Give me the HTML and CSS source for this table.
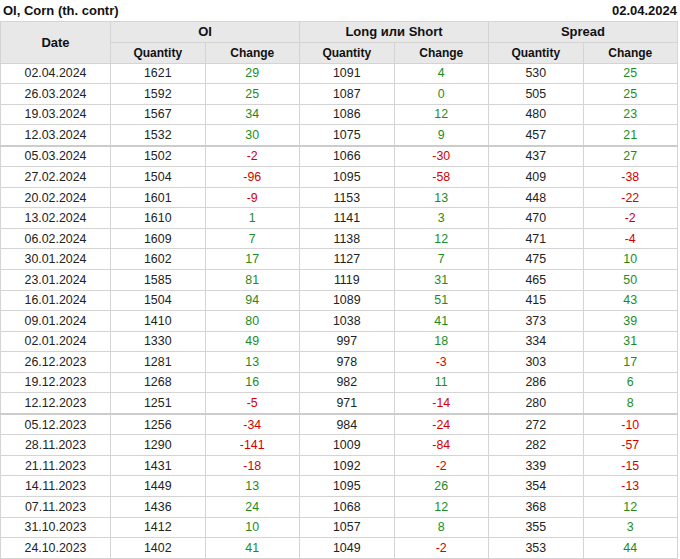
FILE: index.html
```html
<!DOCTYPE html>
<html>
<head>
<meta charset="utf-8">
<link rel="stylesheet" href="styles.css">
</head>
<body>
<div class="titlebar">
  <span class="title">OI, Corn (th. contr)</span>
  <span class="date">02.04.2024</span>
</div>
<table class="grid">
  <colgroup>
    <col class="c-date"><col><col><col><col><col><col>
  </colgroup>
  <thead>
    <tr class="h1">
      <th rowspan="2" class="big">Date</th>
      <th colspan="2" class="big">OI</th>
      <th colspan="2" class="big">Long или Short</th>
      <th colspan="2" class="big">Spread</th>
    </tr>
    <tr class="h2">
      <th>Quantity</th><th>Change</th>
      <th>Quantity</th><th>Change</th>
      <th>Quantity</th><th>Change</th>
    </tr>
  </thead>
  <tbody>
    <tr><td>02.04.2024</td><td>1621</td><td class="up">29</td><td>1091</td><td class="up">4</td><td>530</td><td class="up">25</td></tr>
    <tr><td>26.03.2024</td><td>1592</td><td class="up">25</td><td>1087</td><td class="up">0</td><td>505</td><td class="up">25</td></tr>
    <tr><td>19.03.2024</td><td>1567</td><td class="up">34</td><td>1086</td><td class="up">12</td><td>480</td><td class="up">23</td></tr>
    <tr><td>12.03.2024</td><td>1532</td><td class="up">30</td><td>1075</td><td class="up">9</td><td>457</td><td class="up">21</td></tr>
    <tr class="sep"><td>05.03.2024</td><td>1502</td><td class="dn">-2</td><td>1066</td><td class="dn">-30</td><td>437</td><td class="up">27</td></tr>
    <tr><td>27.02.2024</td><td>1504</td><td class="dn">-96</td><td>1095</td><td class="dn">-58</td><td>409</td><td class="dn">-38</td></tr>
    <tr><td>20.02.2024</td><td>1601</td><td class="dn">-9</td><td>1153</td><td class="up">13</td><td>448</td><td class="dn">-22</td></tr>
    <tr><td>13.02.2024</td><td>1610</td><td class="up">1</td><td>1141</td><td class="up">3</td><td>470</td><td class="dn">-2</td></tr>
    <tr><td>06.02.2024</td><td>1609</td><td class="up">7</td><td>1138</td><td class="up">12</td><td>471</td><td class="dn">-4</td></tr>
    <tr><td>30.01.2024</td><td>1602</td><td class="up">17</td><td>1127</td><td class="up">7</td><td>475</td><td class="up">10</td></tr>
    <tr><td>23.01.2024</td><td>1585</td><td class="up">81</td><td>1119</td><td class="up">31</td><td>465</td><td class="up">50</td></tr>
    <tr><td>16.01.2024</td><td>1504</td><td class="up">94</td><td>1089</td><td class="up">51</td><td>415</td><td class="up">43</td></tr>
    <tr><td>09.01.2024</td><td>1410</td><td class="up">80</td><td>1038</td><td class="up">41</td><td>373</td><td class="up">39</td></tr>
    <tr><td>02.01.2024</td><td>1330</td><td class="up">49</td><td>997</td><td class="up">18</td><td>334</td><td class="up">31</td></tr>
    <tr><td>26.12.2023</td><td>1281</td><td class="up">13</td><td>978</td><td class="dn">-3</td><td>303</td><td class="up">17</td></tr>
    <tr><td>19.12.2023</td><td>1268</td><td class="up">16</td><td>982</td><td class="up">11</td><td>286</td><td class="up">6</td></tr>
    <tr><td>12.12.2023</td><td>1251</td><td class="dn">-5</td><td>971</td><td class="dn">-14</td><td>280</td><td class="up">8</td></tr>
    <tr class="sep"><td>05.12.2023</td><td>1256</td><td class="dn">-34</td><td>984</td><td class="dn">-24</td><td>272</td><td class="dn">-10</td></tr>
    <tr><td>28.11.2023</td><td>1290</td><td class="dn">-141</td><td>1009</td><td class="dn">-84</td><td>282</td><td class="dn">-57</td></tr>
    <tr><td>21.11.2023</td><td>1431</td><td class="dn">-18</td><td>1092</td><td class="dn">-2</td><td>339</td><td class="dn">-15</td></tr>
    <tr><td>14.11.2023</td><td>1449</td><td class="up">13</td><td>1095</td><td class="up">26</td><td>354</td><td class="dn">-13</td></tr>
    <tr><td>07.11.2023</td><td>1436</td><td class="up">24</td><td>1068</td><td class="up">12</td><td>368</td><td class="up">12</td></tr>
    <tr><td>31.10.2023</td><td>1412</td><td class="up">10</td><td>1057</td><td class="up">8</td><td>355</td><td class="up">3</td></tr>
    <tr><td>24.10.2023</td><td>1402</td><td class="up">41</td><td>1049</td><td class="dn">-2</td><td>353</td><td class="up">44</td></tr>
  </tbody>
</table>
</body>
</html>
```
FILE: styles.css
```css
html, body {
  margin: 0;
  padding: 0;
  background: #ffffff;
}
body {
  font-family: "Liberation Sans", Arial, sans-serif;
  color: #222222;
}
.titlebar {
  display: flex;
  justify-content: space-between;
  align-items: center;
  height: 21px;
  padding: 0 3px 1px 3px;
  box-sizing: border-box;
  font-size: 13px;
  font-weight: bold;
  color: #111111;
}
.grid {
  width: 678px;
  table-layout: fixed;
  border-collapse: collapse;
  font-size: 12.4px;
}
.c-date {
  width: 110px;
}
.grid th,
.grid td {
  border: 1px solid #d4d4d4;
  padding: 0;
  text-align: center;
  white-space: nowrap;
}
.grid th {
  background: #e8e8e8;
  font-weight: bold;
  font-size: 12px;
  color: #111111;
}
.grid th.big {
  font-size: 13px;
}
.h1 th {
  height: 19.5px;
}
.h2 th {
  height: 20px;
}
.grid td {
  height: 19.55px;
}
.grid tr.sep td {
  border-top: 2px solid #cccccc;
}
.up {
  color: #1c8c1c;
}
.dn {
  color: #d40000;
}
```
